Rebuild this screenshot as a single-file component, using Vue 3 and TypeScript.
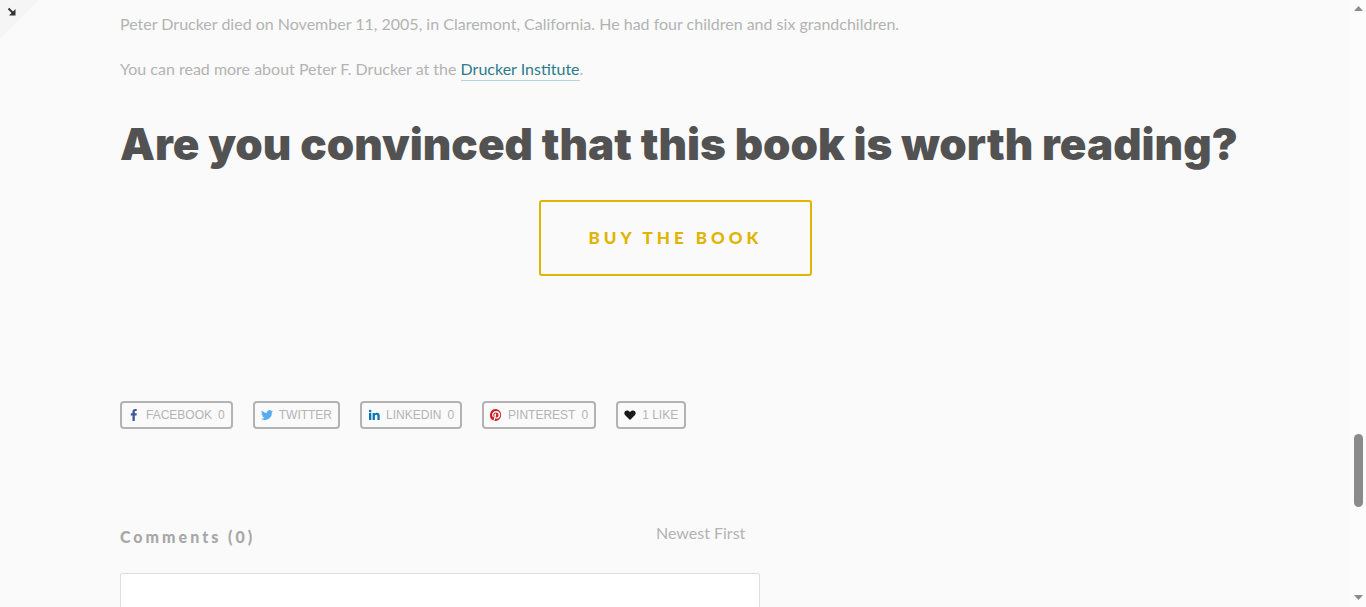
<script setup lang="ts">
import { ref } from 'vue'

interface Share {
  name: string
  label: string
  count?: number
  color: string
  path: string
}

const shares: Share[] = [
  {
    name: 'facebook',
    label: 'FACEBOOK',
    count: 0,
    color: '#3b5998',
    path: 'M5.500 13V7.500H3.800V5.300H5.500V3.800C5.500 1.900 6.600 1 8.200 1h1.500v2H8.800c-.8 0-1 .4-1 1v1.300h2L9.500 7.500H7.800V13z',
  },
  {
    name: 'twitter',
    label: 'TWITTER',
    color: '#55acee',
    path: 'M13 3.2c-.4.2-.9.3-1.4.4.5-.3.9-.8 1.1-1.4-.5.3-1 .5-1.6.6a2.5 2.5 0 0 0-4.2 2.3C4.800 5 3 4 1.800 2.500c-.7 1.200-.3 2.600.8 3.300-.4 0-.8-.1-1.100-.3 0 1.200.8 2.200 2 2.500-.4.1-.7.1-1.100 0 .3 1 1.200 1.700 2.300 1.700A5 5 0 0 1 1 10.800 7 7 0 0 0 11.800 4.500c.5-.3.9-.8 1.200-1.300z',
  },
  {
    name: 'linkedin',
    label: 'LINKEDIN',
    count: 0,
    color: '#0976b4',
    path: 'M2 5h2.300v7H2zM3.150 1.800a1.300 1.300 0 1 1 0 2.600 1.300 1.300 0 0 1 0-2.600zM5.600 5h2.200v1C8.200 5.300 9 4.800 10 4.800c2.200 0 2.700 1.400 2.700 3.300V12h-2.300V8.600c0-.9 0-1.900-1.200-1.900S7.900 7.600 7.900 8.500V12H5.600z',
  },
  {
    name: 'pinterest',
    label: 'PINTEREST',
    count: 0,
    color: '#cc2127',
    path: 'M7 1a6 6 0 0 0-2.200 11.600c-.05-.5-.1-1.200 0-1.700l.7-3s-.2-.4-.2-.9c0-.8.5-1.400 1.100-1.400.5 0 .8.4.8.9 0 .5-.3 1.300-.5 2-.1.6.3 1.100.9 1.100 1.100 0 1.900-1.100 1.900-2.800 0-1.400-1-2.400-2.500-2.400a2.600 2.600 0 0 0-2.700 2.600c0 .5.2 1.100.4 1.400l-.2.9C3.600 8.900 3.100 7.900 3.100 7c0-2 1.500-3.900 4.200-3.900 2.200 0 3.900 1.600 3.900 3.700 0 2.200-1.400 4-3.300 4-.7 0-1.300-.3-1.500-.7l-.4 1.500c-.1.500-.5 1.100-.7 1.400A6 6 0 1 0 7 1z',
  },
  {
    name: 'like',
    label: '1 LIKE',
    color: '#1a1a1a',
    path: 'M7 12 2.200 7.300C.4 5.400 1.500 2.500 4 2.500c1.300 0 2.300.6 3 1.600.7-1 1.700-1.600 3-1.600 2.500 0 3.600 2.900 1.800 4.800z',
  },
]

const order = ref('newest')
const comment = ref('')
</script>

<template>
  <div class="page">
    <button class="corner" type="button" aria-label="Expand">
      <svg width="10" height="10" viewBox="0 0 10 10" aria-hidden="true">
        <path d="M1.500 1.500 6.500 6.500" stroke="#333" stroke-width="2" fill="none" />
        <path d="M8.500 2v6.500H2L8.500 2z" fill="#333" />
      </svg>
    </button>

    <main class="content">
      <p class="text">
        Peter Drucker died on November 11, 2005, in Claremont, California. He had four children and
        six grandchildren.
      </p>
      <p class="text">
        You can read more about Peter F. Drucker at the <a href="#institute">Drucker Institute</a>.
      </p>
      <h1>Are you convinced that this book is worth reading?</h1>
      <a class="buy" href="#buy">BUY THE BOOK</a>

      <div class="shares">
        <button v-for="s in shares" :key="s.name" class="share" type="button">
          <svg width="13" height="14" viewBox="0 0 13 14" aria-hidden="true">
            <path :d="s.path" :fill="s.color" />
          </svg>
          <span>{{ s.label }}</span>
          <span v-if="s.count !== undefined">{{ s.count }}</span>
        </button>
      </div>

      <section class="comments">
        <header>
          <h2>Comments (0)</h2>
          <select v-model="order" aria-label="Sort comments">
            <option value="newest">Newest First</option>
          </select>
        </header>
        <textarea v-model="comment" aria-label="Comment"></textarea>
      </section>
    </main>

    <div class="scrollbar" aria-hidden="true">
      <svg width="9" height="5" viewBox="0 0 9 5"><path d="M0 5 4.500 0 9 5z" fill="#8b8b8b" /></svg>
      <div class="track"><div class="thumb"></div></div>
      <svg width="9" height="5" viewBox="0 0 9 5"><path d="M0 0h9L4.500 5z" fill="#8b8b8b" /></svg>
    </div>
  </div>
</template>

<style>
body {
  background: #fafafa;
}
</style>

<style scoped>
.page {
  position: relative;
  display: flex;
  height: 100vh;
  overflow: hidden;
  background: #fafafa;
  font-family: Lato, 'Liberation Sans', sans-serif;
  color: #b3b3b3;
}

.corner {
  position: absolute;
  top: 0;
  left: 0;
  width: 40px;
  height: 40px;
  padding: 7px;
  border: 0;
  background: linear-gradient(135deg, #f5f5f5 50%, transparent 50%);
  display: flex;
  align-items: flex-start;
}

.content {
  flex: 1;
  min-width: 0;
  padding: 9px 120px 0;
  display: flex;
  flex-direction: column;
}

.text {
  margin: 0 0 15px;
  font-size: 16px;
  line-height: 30px;
}

.text a {
  padding-bottom: 2px;
  color: #2b7a8c;
  text-decoration: none;
  border-bottom: 1px solid #b5d5db;
}

h1 {
  margin: 15px 0 26px;
  font-family: Inter, Lato, sans-serif;
  font-size: 44px;
  line-height: 60px;
  font-weight: 900;
  color: #525252;
  white-space: nowrap;
}

.buy {
  align-self: center;
  padding: 24px 48px;
  border: 2px solid #e0b400;
  border-radius: 3px;
  color: #e0b400;
  font-size: 17px;
  line-height: 24px;
  font-weight: 900;
  letter-spacing: 4px;
  text-decoration: none;
}

.shares {
  display: flex;
  gap: 20px;
  margin-top: 125px;
}

.share {
  display: flex;
  align-items: center;
  gap: 6px;
  padding: 0 6px 0 5px;
  height: 28px;
  border: 2px solid #b3b3b3;
  border-radius: 4px;
  background: transparent;
  color: #b3b3b3;
  font-family: 'Liberation Sans', Arial, sans-serif;
  font-size: 12px;
  line-height: 24px;
}

.comments {
  width: 640px;
  max-width: 100%;
  margin-top: 89px;
}

.comments header {
  display: flex;
  justify-content: space-between;
  align-items: flex-start;
  height: 55px;
}

h2 {
  margin: 4px 0 0;
  font-size: 16px;
  line-height: 30px;
  font-weight: 900;
  letter-spacing: 3px;
  color: #a8a8a8;
}

select {
  appearance: none;
  margin: 0 14px 0 0;
  padding: 0;
  border: 0;
  background: transparent;
  color: #b3b3b3;
  font-family: inherit;
  font-size: 16px;
  line-height: 30px;
}

textarea {
  display: block;
  box-sizing: border-box;
  width: 100%;
  height: 120px;
  border: 1px solid #dedede;
  border-radius: 2px;
  background: #fff;
  resize: none;
}

.scrollbar {
  flex: none;
  width: 15px;
  box-sizing: border-box;
  padding: 6px 0 7px;
  display: flex;
  flex-direction: column;
  align-items: center;
  background: #fcfcfc;
}

.track {
  flex: 1;
  display: flex;
  flex-direction: column;
  justify-content: flex-end;
}

.thumb {
  width: 9px;
  height: 73px;
  margin-bottom: 88px;
  border-radius: 5px;
  background: #8b8b8b;
}
</style>
